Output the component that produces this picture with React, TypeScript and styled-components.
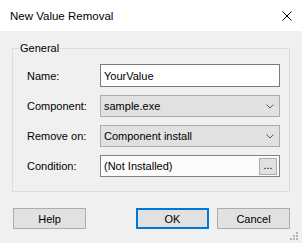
import React from 'react';
import styled, { createGlobalStyle } from 'styled-components';

const GlobalStyle = createGlobalStyle`
  html, body {
    margin: 0;
    padding: 0;
    background: #f0f0f0;
  }
  * {
    box-sizing: border-box;
  }
`;

const Window = styled.div`
  position: relative;
  width: 302px;
  height: 243px;
  background: #f0f0f0;
  font-family: 'Liberation Sans', Arial, sans-serif;
  font-size: 11px;
  color: #000;
  overflow: hidden;
`;

const TitleBar = styled.div`
  display: flex;
  align-items: center;
  justify-content: space-between;
  height: 31px;
  padding: 0 10px 0 10px;
  background: #fff;
  font-size: 11.5px;
`;

const CloseIcon = styled.svg`
  width: 10px;
  height: 10px;
  margin-right: 0;
`;

const Body = styled.div`
  display: flex;
  flex-direction: column;
  padding: 0 12px 0 12px;
`;

const GroupBox = styled.fieldset`
  margin: 9px 0 0 0;
  padding: 8px 9px 14px 6px;
  border: 1px solid #dcdcdc;
  display: flex;
  flex-direction: column;
  gap: 8px;
`;

const Legend = styled.legend`
  padding: 0 1px;
  line-height: 16px;
  font-size: 11px;
`;

const Row = styled.div<{ $h: number }>`
  display: flex;
  align-items: center;
  height: ${(p) => p.$h}px;
  padding-left: 8px;
`;

const Label = styled.span`
  width: 73px;
  flex-shrink: 0;
`;

const TextBox = styled.div`
  flex: 1;
  height: 100%;
  display: flex;
  align-items: center;
  padding-left: 3px;
  background: #fff;
  border: 1px solid #7a7a7a;
`;

const Combo = styled.div`
  flex: 1;
  height: 100%;
  display: flex;
  align-items: center;
  justify-content: space-between;
  padding: 0 5px 0 3px;
  background: #e1e1e1;
  border: 1px solid #adadad;
`;

const ReadOnlyBox = styled.div`
  flex: 1;
  height: 100%;
  display: flex;
  align-items: center;
  justify-content: space-between;
  padding: 2px 2px 2px 3px;
  background: #fbfbfb;
  border: 1px solid #828282;
`;

const BrowseButton = styled.div`
  width: 18px;
  height: 17px;
  display: flex;
  align-items: flex-end;
  justify-content: center;
  padding-bottom: 3px;
  background: #e1e1e1;
  border: 1px solid #adadad;
  font-size: 11px;
  line-height: 11px;
`;

const ButtonRow = styled.div`
  display: flex;
  align-items: center;
  margin-top: 16px;
  padding-left: 1px;
`;

const Button = styled.div<{ $primary?: boolean }>`
  width: 73px;
  height: 21px;
  display: flex;
  align-items: center;
  justify-content: center;
  background: #e1e1e1;
  border: ${(p) => (p.$primary ? '2px solid #0078d7' : '1px solid #adadad')};
`;

const Spacer = styled.div`
  flex: 1;
`;

const ButtonGap = styled.div`
  width: 8px;
`;

const Grip = styled.svg`
  position: absolute;
  right: 4px;
  bottom: 3px;
  width: 8px;
  height: 8px;
`;

const Chevron = () => (
  <svg width="8" height="5" viewBox="0 0 8 5">
    <polyline points="0.5,0.5 4,4 7.5,0.5" fill="none" stroke="#5a5a5a" strokeWidth="1" />
  </svg>
);

export default function App() {
  return (
    <Window>
      <GlobalStyle />
      <TitleBar>
        <span>New Value Removal</span>
        <CloseIcon viewBox="0 0 10 10">
          <line x1="0.5" y1="0.5" x2="9.5" y2="9.5" stroke="#000" strokeWidth="1" />
          <line x1="9.5" y1="0.5" x2="0.5" y2="9.5" stroke="#000" strokeWidth="1" />
        </CloseIcon>
      </TitleBar>
      <Body>
        <GroupBox>
          <Legend>General</Legend>
          <Row $h={23}>
            <Label>Name:</Label>
            <TextBox>YourValue</TextBox>
          </Row>
          <Row $h={22}>
            <Label>Component:</Label>
            <Combo>
              <span>sample.exe</span>
              <Chevron />
            </Combo>
          </Row>
          <Row $h={22}>
            <Label>Remove on:</Label>
            <Combo>
              <span>Component install</span>
              <Chevron />
            </Combo>
          </Row>
          <Row $h={22}>
            <Label>Condition:</Label>
            <ReadOnlyBox>
              <span>(Not Installed)</span>
              <BrowseButton>...</BrowseButton>
            </ReadOnlyBox>
          </Row>
        </GroupBox>
        <ButtonRow>
          <Button>Help</Button>
          <Spacer />
          <Button $primary>OK</Button>
          <ButtonGap />
          <Button>Cancel</Button>
        </ButtonRow>
      </Body>
      <Grip viewBox="0 0 8 8">
        <rect x="6" y="0" width="2" height="2" fill="#b4b4b4" />
        <rect x="3" y="3" width="2" height="2" fill="#b4b4b4" />
        <rect x="6" y="3" width="2" height="2" fill="#b4b4b4" />
        <rect x="0" y="6" width="2" height="2" fill="#b4b4b4" />
        <rect x="3" y="6" width="2" height="2" fill="#b4b4b4" />
        <rect x="6" y="6" width="2" height="2" fill="#b4b4b4" />
      </Grip>
    </Window>
  );
}
